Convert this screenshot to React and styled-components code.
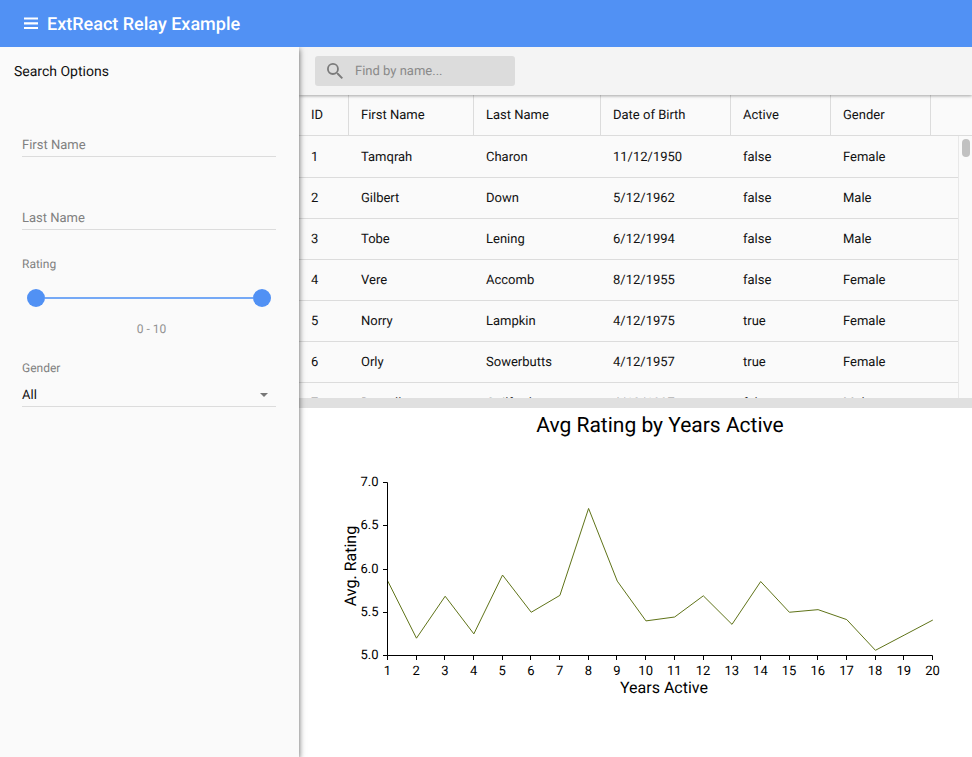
import React from 'react';
import styled, { createGlobalStyle } from 'styled-components';

const GlobalStyle = createGlobalStyle`
  * { box-sizing: border-box; }
  html, body { margin: 0; padding: 0; overflow: hidden; }
  body { font-family: Roboto, "Liberation Sans", sans-serif; font-size: 13px; color: #111; background: #fafafa; text-rendering: geometricPrecision; }
`;

const Page = styled.div`
  display: flex;
  flex-direction: column;
  width: 100%;
  height: 757px;
  overflow: hidden;
`;

const TitleBar = styled.header`
  display: flex;
  align-items: center;
  flex: none;
  height: 47px;
  padding-left: 24px;
  gap: 9px;
  background: #5191f4;
  color: #fff;
`;

const Title = styled.h1`
  margin: 0;
  padding-top: 2px;
  font-size: 18px;
  line-height: 24px;
  font-weight: 500;
  white-space: nowrap;
`;

const Body = styled.div`
  display: flex;
  flex: 1;
  min-height: 0;
  overflow: hidden;
`;

const Sidebar = styled.aside`
  display: flex;
  flex-direction: column;
  flex: none;
  width: 299px;
  padding: 15px 23px 0 22px;
  background: #fafafa;
  box-shadow: 0 2px 6px rgba(0, 0, 0, 0.65);
  clip-path: inset(0 -12px 0 0);
  z-index: 1;
`;

const PanelTitle = styled.h2`
  margin: 0 0 0 -8px;
  font-size: 14px;
  line-height: 20px;
  font-weight: 400;
`;

const TextInput = styled.input`
  width: 100%;
  height: 24px;
  margin-top: ${(p) => p.$gap}px;
  padding: 2px 0 0;
  border: 0;
  border-bottom: 1px solid #dcdcdc;
  outline: 0;
  background: transparent;
  font: 13px/20px Roboto, sans-serif;
  text-rendering: inherit;
  &::placeholder { color: #808080; opacity: 1; }
`;

const Label = styled.label`
  margin-top: ${(p) => p.$gap}px;
  font-size: 12px;
  line-height: 16px;
  color: #808080;
`;

const Slider = styled.div`
  display: flex;
  align-items: center;
  height: 18px;
  margin: 17px 5px 0;
`;

const Thumb = styled.span`
  width: 18px;
  height: 18px;
  border-radius: 50%;
  background: #5191f4;
`;

const Track = styled.span`
  flex: 1;
  height: 2px;
  background: #75a9f6;
`;

const RangeText = styled.div`
  margin-top: 14px;
  padding-left: 5px;
  text-align: center;
  font-size: 12px;
  line-height: 16px;
  color: #919191;
`;

const SelectField = styled.div`
  display: flex;
  align-items: center;
  justify-content: space-between;
  height: 24px;
  margin-top: 7px;
  padding-right: 8px;
  border-bottom: 1px solid #dcdcdc;
  line-height: 20px;
`;

const SelectValue = styled.span`
  padding-top: 2px;
`;

const Main = styled.main`
  display: flex;
  flex-direction: column;
  flex: 1;
  min-width: 0;
`;

const Toolbar = styled.div`
  display: flex;
  align-items: center;
  flex: none;
  height: 48px;
  padding-left: 16px;
  background: #f4f4f4;
  box-shadow: 0 1px 3px rgba(0, 0, 0, 0.35);
  z-index: 0;
`;

const SearchBox = styled.label`
  display: flex;
  align-items: center;
  width: 200px;
  height: 30px;
  padding-left: 12px;
  gap: 12px;
  border-radius: 3px;
  background: #dcdcdc;
`;

const SearchInput = styled.input`
  width: 150px;
  padding: 2px 0 0;
  border: 0;
  outline: 0;
  background: transparent;
  font: 13px/20px Roboto, sans-serif;
  text-rendering: inherit;
  &::placeholder { color: #8a8a8a; opacity: 1; }
`;

const Grid = styled.section`
  display: flex;
  flex-direction: column;
  flex: none;
  height: 303px;
  overflow: hidden;
`;

const columns = '50px 125px 127px 130px 100px 100px';

const HeaderRow = styled.div`
  display: grid;
  grid-template-columns: ${columns};
  flex: none;
  height: 41px;
  border-bottom: 1px solid #dcdcdc;
`;

const HeaderCell = styled.div`
  padding-left: 12px;
  border-right: 1px solid #dcdcdc;
  height: 40px;
  line-height: 41px;
`;

const Scroller = styled.div`
  display: flex;
  flex: 1;
  min-height: 0;
`;

const Rows = styled.div`
  flex: 1;
  min-width: 0;
  overflow: hidden;
`;

const Row = styled.div`
  display: grid;
  grid-template-columns: ${columns};
  height: 41px;
  border-bottom: 1px solid #dcdcdc;
  &:first-child { height: 42px; padding-top: 1px; }
`;

const Cell = styled.div`
  padding-left: 12px;
  height: 40px;
  line-height: 42px;
`;

const ScrollTrack = styled.div`
  width: 14px;
  padding: 3px 2px 0 3px;
  border-left: 1px solid #e8e8e8;
`;

const ScrollThumb = styled.div`
  width: 8px;
  height: 18px;
  border-radius: 4px;
  background: #c1c1c1;
`;

const Splitter = styled.div`
  flex: none;
  height: 10px;
  background: #e0e0e0;
`;

const ChartPanel = styled.section`
  flex: 1;
  background: #fff;
`;

const Plot = styled.svg`
  display: block;
  text { font-family: Roboto, sans-serif; fill: #000; }
`;

const headers = ['ID', 'First Name', 'Last Name', 'Date of Birth', 'Active', 'Gender'];
const people = [
  ['1', 'Tamqrah', 'Charon', '11/12/1950', 'false', 'Female'],
  ['2', 'Gilbert', 'Down', '5/12/1962', 'false', 'Male'],
  ['3', 'Tobe', 'Lening', '6/12/1994', 'false', 'Male'],
  ['4', 'Vere', 'Accomb', '8/12/1955', 'false', 'Female'],
  ['5', 'Norry', 'Lampkin', '4/12/1975', 'true', 'Female'],
  ['6', 'Orly', 'Sowerbutts', '4/12/1957', 'true', 'Female'],
  ['7', 'Darnell', 'Guilford', '4/12/1997', 'false', 'Male'],
];

const ratings = [5.86, 5.2, 5.685, 5.25, 5.93, 5.5, 5.695, 6.7, 5.86, 5.4, 5.445, 5.69, 5.36, 5.855, 5.5, 5.53, 5.415, 5.06, 5.235, 5.41];

const left = 88.5;
const right = 633.5;
const top = 74.5;
const bottom = 247.5;
const xAt = (i) => left + (i * (right - left)) / 19;
const yAt = (v) => bottom - ((v - 5) * (bottom - top)) / 2;
const snap = (n) => Math.floor(n) + 0.5;

function Chart() {
  return (
    <Plot width="673" height="349" viewBox="0 0 673 349">
      <text x="361" y="24" fontSize="21" textAnchor="middle">Avg Rating by Years Active</text>
      <polyline
        points={ratings.map((r, i) => `${xAt(i) + 0.3},${yAt(r)}`).join(' ')}
        fill="none"
        stroke="#5f7318"
        strokeWidth="1"
      />
      <path d={`M${left} ${top}V${bottom}H${right}`} fill="none" stroke="#000" />
      {[7, 6.5, 6, 5.5, 5].map((v) => (
        <g key={v}>
          <path d={`M84 ${snap(yAt(v))}H${left}`} stroke="#000" />
          <text x="79.5" y={snap(yAt(v)) + 3.5} fontSize="13" textAnchor="end">{v.toFixed(1)}</text>
        </g>
      ))}
      {ratings.map((_, i) => (
        <g key={i}>
          <path d={`M${snap(xAt(i))} ${bottom}v4.5`} stroke="#000" />
          <text x={xAt(i)} y="267" fontSize="13" textAnchor="middle">{i + 1}</text>
        </g>
      ))}
      <text x="365" y="285" fontSize="16" textAnchor="middle">Years Active</text>
      <text transform="translate(57 158) rotate(-90)" fontSize="16" textAnchor="middle">Avg. Rating</text>
    </Plot>
  );
}

export default function App() {
  return (
    <Page>
      <GlobalStyle />
      <TitleBar>
        <svg width="14" height="13" viewBox="0 0 14 13" fill="#fff">
          <path d="M0 .6h14v2H0zM0 5.2h14v2.2H0zM0 10h14v2H0z" />
        </svg>
        <Title>ExtReact Relay Example</Title>
      </TitleBar>
      <Body>
        <Sidebar>
          <PanelTitle>Search Options</PanelTitle>
          <TextInput $gap={51} placeholder="First Name" />
          <TextInput $gap={49} placeholder="Last Name" />
          <Label $gap={26}>Rating</Label>
          <Slider><Thumb /><Track /><Thumb /></Slider>
          <RangeText>0 - 10</RangeText>
          <Label $gap={23}>Gender</Label>
          <SelectField>
            <SelectValue>All</SelectValue>
            <svg width="8" height="4" viewBox="0 0 8 4"><path d="M0 0h8L4 4z" fill="#777" /></svg>
          </SelectField>
        </Sidebar>
        <Main>
          <Toolbar>
            <SearchBox>
              <svg width="16" height="16" viewBox="3 3 17.5 17.5" fill="#7b7b7b">
                <path d="M15.5 14h-.79l-.28-.27A6.47 6.47 0 0 0 16 9.5 6.5 6.5 0 1 0 9.5 16c1.61 0 3.09-.59 4.23-1.57l.27.28v.79l5 4.99L20.49 19l-4.99-5zm-6 0a4.5 4.5 0 1 1 0-9 4.5 4.5 0 0 1 0 9z" />
              </svg>
              <SearchInput placeholder="Find by name..." />
            </SearchBox>
          </Toolbar>
          <Grid>
            <HeaderRow>{headers.map((h) => <HeaderCell key={h}>{h}</HeaderCell>)}</HeaderRow>
            <Scroller>
              <Rows>
                {people.map((p) => (
                  <Row key={p[0]}>{p.map((c, i) => <Cell key={i}>{c}</Cell>)}</Row>
                ))}
              </Rows>
              <ScrollTrack><ScrollThumb /></ScrollTrack>
            </Scroller>
          </Grid>
          <Splitter />
          <ChartPanel><Chart /></ChartPanel>
        </Main>
      </Body>
    </Page>
  );
}
